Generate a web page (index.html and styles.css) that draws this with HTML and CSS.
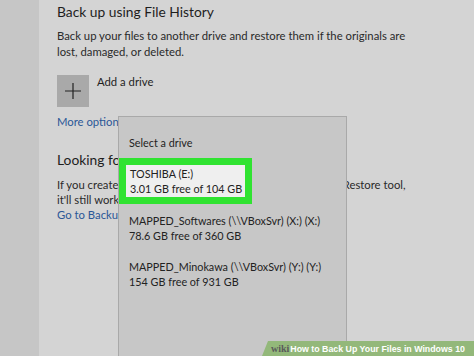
FILE: index.html
```html
<!DOCTYPE html>
<html>
<head>
<meta charset="utf-8">
<link rel="stylesheet" href="styles.css">
</head>
<body>
<div class="screen">
  <div class="sidebar"></div>
  <div class="main">
    <h1 class="title">Back up using File History</h1>
    <p class="desc">Back up your files to another drive and restore them if the originals are<br>lost, damaged, or deleted.</p>
    <div class="add">
      <div class="plus"><svg width="16" height="16" viewBox="0 0 16 16"><path d="M8 0V16M0 8H16" stroke="#222" stroke-width="1.2"/></svg></div>
      <span class="add-label">Add a drive</span>
    </div>
    <a class="link more">More options</a>
    <h2 class="title title2">Looking for an older backup?</h2>
    <p class="desc desc2">If you created a backup using the Windows 7 Backup and Restore tool,<br>it'll still work in Windows 10.</p>
    <a class="link">Go to Backup and Restore (Windows 7)</a>
  </div>
  <div class="popup">
    <div class="popup-head">Select a drive</div>
    <div class="drive selected">
      <div class="drive-inner">
        <div>TOSHIBA (E:)</div>
        <div>3.01 GB free of 104 GB</div>
      </div>
    </div>
    <div class="drive">
      <div class="drive-inner">
        <div>MAPPED_Softwares (\\VBoxSvr) (X:) (X:)</div>
        <div>78.6 GB free of 360 GB</div>
      </div>
    </div>
    <div class="drive">
      <div class="drive-inner">
        <div>MAPPED_Minokawa (\\VBoxSvr) (Y:) (Y:)</div>
        <div>154 GB free of 931 GB</div>
      </div>
    </div>
  </div>
  <div class="watermark"><span class="wiki">wiki</span><span class="how">How</span> to Back Up Your Files in Windows 10</div>
</div>
</body>
</html>
```
FILE: styles.css
```css
html, body {
  margin: 0;
  padding: 0;
}
body {
  width: 474px;
  height: 356px;
  overflow: hidden;
  font-family: "Lato", "Open Sans", sans-serif;
  color: #1f1f1f;
}
.screen {
  position: relative;
  display: flex;
  width: 474px;
  height: 356px;
  background: #d4d4d4;
}
.sidebar {
  width: 39px;
  flex: none;
  background: #c6c6c6;
}
.main {
  flex: 1;
  padding: 1px 0 0 18px;
  overflow: hidden;
  white-space: nowrap;
}
.title {
  margin: 0;
  font-size: 13.8px;
  font-weight: 400;
  line-height: 22px;
  color: #1e1e1e;
}
.desc {
  margin: 5px 0 0;
  font-size: 11.3px;
  line-height: 16px;
  color: #2a2a2a;
}
.add {
  display: flex;
  align-items: flex-start;
  gap: 8px;
  margin-top: 15px;
}
.plus {
  width: 32px;
  height: 32px;
  background: #a9a9a9;
  display: flex;
  align-items: center;
  justify-content: center;
}
.add-label {
  font-size: 11.3px;
  line-height: 14px;
}
.link {
  display: block;
  font-size: 11.3px;
  line-height: 15px;
  color: #2b5797;
}
.more {
  margin-top: 7px;
}
.title2 {
  margin-top: 20px;
}
.desc2 {
  margin-top: 6px;
  line-height: 15px;
}
.popup {
  position: absolute;
  left: 118px;
  top: 116px;
  width: 229px;
  height: 250px;
  background: #c7c7c7;
  border: 1px solid #a9a9a9;
  border-bottom: none;
  box-sizing: border-box;
  font-size: 10.8px;
  line-height: 15px;
  color: #222;
  white-space: nowrap;
}
.popup-head {
  padding: 18px 0 0 10px;
  height: 41px;
  box-sizing: border-box;
}
.drive {
  padding: 0 0 16px 10px;
}
.drive.selected {
  width: fit-content;
  padding: 7px;
  background: #30e331;
  margin-bottom: 9px;
}
.drive.selected .drive-inner {
  background: #efefef;
  padding: 1px 3px 1px 4px;
}
.watermark {
  position: absolute;
  right: 0;
  bottom: 0;
  height: 15px;
  width: 212px;
  background: #93b87a;
  clip-path: polygon(6px 0, 100% 0, 100% 100%, 0 100%);
  font-family: "Liberation Sans", Arial, sans-serif;
  font-weight: 700;
  font-size: 8.8px;
  line-height: 15px;
  color: #fff;
  padding-left: 9px;
  box-sizing: border-box;
  white-space: nowrap;
}
.wiki {
  font-family: "Liberation Serif", serif;
  color: #5a5a5a;
  font-size: 10px;
}
.how {
  color: #fff;
  margin-left: 1px;
}
```
